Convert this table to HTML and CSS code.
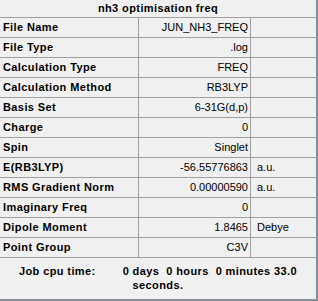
FILE: index.html
```html
<!DOCTYPE html>
<html>
<head>
<meta charset="utf-8">
<link rel="stylesheet" href="styles.css">
</head>
<body>
<div class="panel">
  <div class="title">nh3 optimisation freq</div>
  <div class="grid">
    <div class="lbl">File Name</div><div class="val">JUN_NH3_FREQ</div><div class="unit"></div>
    <div class="lbl">File Type</div><div class="val">.log</div><div class="unit"></div>
    <div class="lbl">Calculation Type</div><div class="val">FREQ</div><div class="unit"></div>
    <div class="lbl">Calculation Method</div><div class="val">RB3LYP</div><div class="unit"></div>
    <div class="lbl">Basis Set</div><div class="val">6-31G(d,p)</div><div class="unit"></div>
    <div class="lbl">Charge</div><div class="val">0</div><div class="unit"></div>
    <div class="lbl">Spin</div><div class="val">Singlet</div><div class="unit"></div>
    <div class="lbl">E(RB3LYP)</div><div class="val">-56.55776863</div><div class="unit">a.u.</div>
    <div class="lbl">RMS Gradient Norm</div><div class="val">0.00000590</div><div class="unit">a.u.</div>
    <div class="lbl">Imaginary Freq</div><div class="val">0</div><div class="unit"></div>
    <div class="lbl">Dipole Moment</div><div class="val">1.8465</div><div class="unit">Debye</div>
    <div class="lbl">Point Group</div><div class="val">C3V</div><div class="unit"></div>
  </div>
  <div class="footer"><span class="job-label">Job cpu time:</span><span>0 days  0 hours  0 minutes 33.0</span><br>seconds.</div>
</div>
</body>
</html>
```

FILE: styles.css
```css
html, body {
  margin: 0;
  padding: 0;
  background: #f0f0f0;
}
body {
  width: 318px;
  height: 301px;
  overflow: hidden;
  font-family: "Liberation Sans", Arial, sans-serif;
  font-size: 11px;
  color: #000;
}
.panel {
  width: 316px;
  height: 299px;
  border-right: 2px solid #868e9a;
  border-bottom: 2px solid #868e9a;
  background: #f0f0f0;
  display: flex;
  flex-direction: column;
}
.title {
  height: 17px;
  line-height: 17px;
  text-align: center;
  font-weight: bold;
  letter-spacing: 0.4px;
  border-bottom: 1px solid #a0a0a0;
}
.grid {
  display: grid;
  grid-template-columns: 138px 111px 65px;
  grid-auto-rows: 19px;
  gap: 1px;
  background: #a0a0a0;
  border-bottom: 1px solid #a0a0a0;
}
.grid > div {
  background: #f0f0f0;
  line-height: 19px;
  white-space: nowrap;
  overflow: hidden;
}
.lbl {
  font-weight: bold;
  letter-spacing: 0.4px;
  padding-left: 3px;
}
.val {
  text-align: right;
  padding-right: 2px;
}
.unit {
  padding-left: 6px;
}
.footer {
  padding-top: 6px;
  line-height: 14px;
  text-align: center;
  font-weight: bold;
  letter-spacing: 0.4px;
  white-space: pre;
}
.job-label {
  margin-right: 27px;
}
```
